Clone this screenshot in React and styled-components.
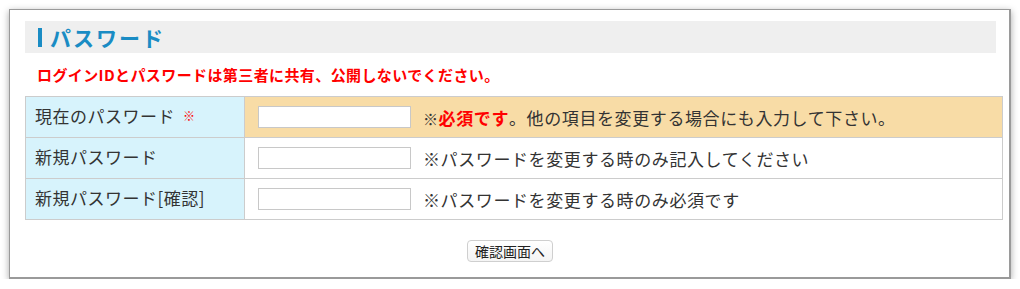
import styled, { createGlobalStyle } from "styled-components";

const GlobalStyle = createGlobalStyle`
  body {
    margin: 0;
    background: #fff;
    font-family: "Noto Sans CJK JP", "Noto Sans", sans-serif;
    color: #333;
  }
`;

const Frame = styled.div`
  margin: 9px 0 0 9px;
  width: 1002px;
  height: 270px;
  border: 2px solid #9a9a9a;
  border-left-width: 1px;
  border-top-width: 1px;
  background: #fff;
  box-shadow: 0 2px 7px rgba(0, 0, 0, 0.35);
  padding: 11px 0 0 15px;
  box-sizing: border-box;
`;

const HeadingBar = styled.div`
  width: 971px;
  height: 32px;
  background: #efefef;
  display: flex;
  align-items: center;
  padding-left: 13px;
  box-sizing: border-box;
`;

const HeadingMark = styled.span`
  width: 4px;
  height: 19px;
  background: #1a8cc4;
  margin-right: 8px;
`;

const HeadingText = styled.h2`
  margin: 0;
  font-size: 21px;
  font-weight: bold;
  color: #1a8cc4;
  letter-spacing: 2px;
  line-height: 1;
`;

const Notice = styled.p`
  margin: 12px 0 0 12px;
  font-size: 15px;
  font-weight: bold;
  color: #f00;
  line-height: 20px;
  letter-spacing: 0.4px;
`;

const Table = styled.table`
  margin-top: 11px;
  width: 978px;
  border-collapse: collapse;
`;

const Label = styled.th`
  width: 219px;
  height: 41px;
  padding: 0 0 4px 9px;
  box-sizing: border-box;
  background: #d7f3fc;
  border: 1px solid #cccccc;
  text-align: left;
  font-weight: normal;
  font-size: 17px;
  letter-spacing: 0.5px;
  color: #333;
  white-space: nowrap;
`;

const Cell = styled.td`
  padding: 0 0 0 13px;
  background: ${(p) => (p.$highlight ? "#f8dca6" : "#fff")};
  border: 1px solid #cccccc;
  font-size: 17px;
  letter-spacing: 0.6px;
  color: #333;
`;

const CellInner = styled.div`
  display: flex;
  align-items: center;
  gap: 12px;
`;

const Input = styled.input`
  width: 153px;
  height: 22px;
  box-sizing: border-box;
  border: 1px solid #c8c8c8;
  background: #fff;
  margin: 0;
`;

const Mark = styled.span`
  color: #f00;
  font-weight: bold;
  font-size: 12px;
  margin-left: 8px;
  vertical-align: 2px;
`;

const Required = styled.span`
  color: #f00;
  font-weight: bold;
`;

const Small = styled.span`
  font-size: 15px;
`;

const Actions = styled.div`
  display: flex;
  justify-content: center;
  width: 970px;
  margin-top: 20px;
`;

const Button = styled.button`
  height: 22px;
  padding: 0 7px;
  border: 1px solid #cfcfcf;
  border-radius: 4px;
  background: linear-gradient(#ffffff, #f4f4f4);
  font-family: "Noto Sans CJK JP", sans-serif;
  font-size: 14px;
  color: #222;
  line-height: 1;
`;

const rows = [
  {
    label: "現在のパスワード",
    required: true,
    highlight: true,
    note: (
      <>
        <Small>※</Small>
        <Required>必須です</Required>。他の項目を変更する場合にも入力して下さい。
      </>
    ),
  },
  { label: "新規パスワード", note: "※パスワードを変更する時のみ記入してください" },
  { label: "新規パスワード[確認]", note: "※パスワードを変更する時のみ必須です" },
];

export default function App() {
  return (
    <>
      <GlobalStyle />
      <Frame>
        <HeadingBar>
          <HeadingMark />
          <HeadingText>パスワード</HeadingText>
        </HeadingBar>
        <Notice>ログインIDとパスワードは第三者に共有、公開しないでください。</Notice>
        <Table>
          <tbody>
            {rows.map((row) => (
              <tr key={row.label}>
                <Label>
                  {row.label}
                  {row.required && <Mark>※</Mark>}
                </Label>
                <Cell $highlight={row.highlight}>
                  <CellInner>
                    <Input type="password" />
                    <span>{row.note}</span>
                  </CellInner>
                </Cell>
              </tr>
            ))}
          </tbody>
        </Table>
        <Actions>
          <Button>確認画面へ</Button>
        </Actions>
      </Frame>
    </>
  );
}
